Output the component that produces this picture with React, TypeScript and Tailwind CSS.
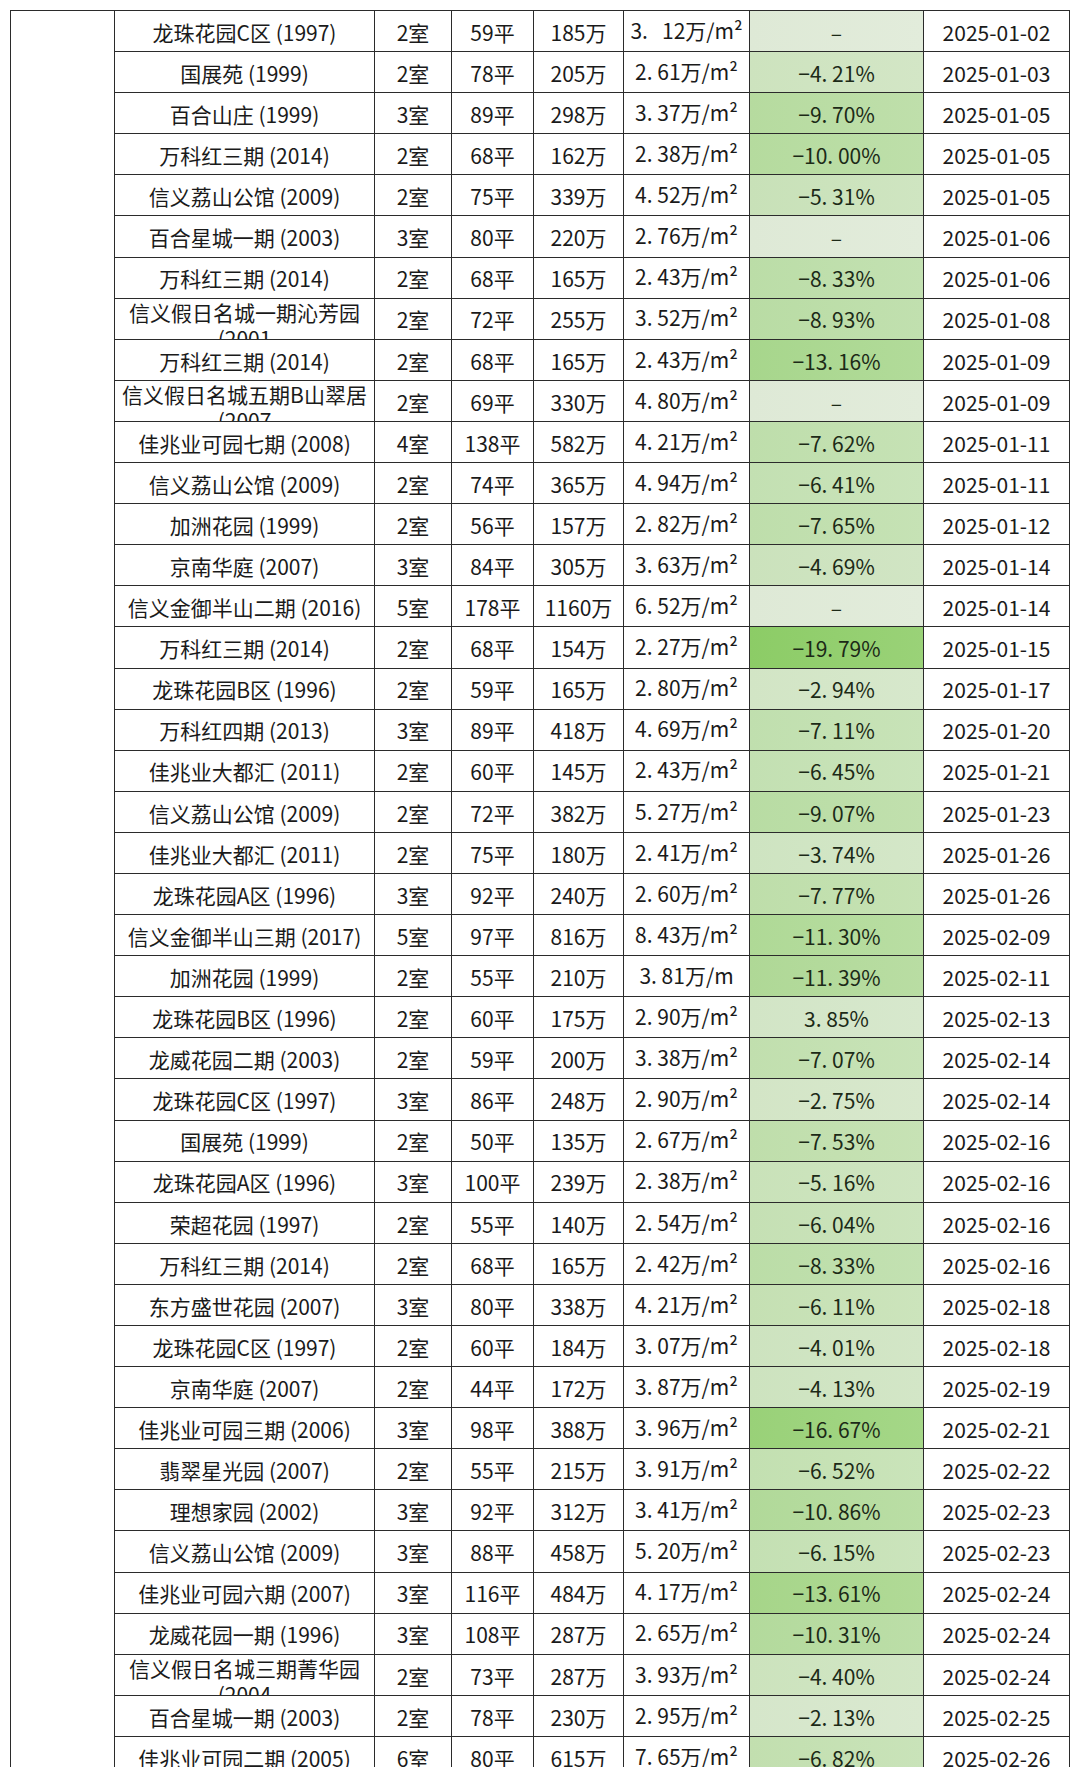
type Row = {
  name: string;
  wrap?: boolean;
  room: string;
  area: string;
  total: string;
  price: string;
  change: number | null;
  label: string;
  date: string;
};

const rows: Row[] = [
  { name: '龙珠花园C区 (1997)', room: '2室', area: '59平', total: '185万', price: '3.   12万/m²', change: null, label: '–', date: '2025-01-02' },
  { name: '国展苑 (1999)', room: '2室', area: '78平', total: '205万', price: '2. 61万/m²', change: -4.21, label: '−4. 21%', date: '2025-01-03' },
  { name: '百合山庄 (1999)', room: '3室', area: '89平', total: '298万', price: '3. 37万/m²', change: -9.7, label: '−9. 70%', date: '2025-01-05' },
  { name: '万科红三期 (2014)', room: '2室', area: '68平', total: '162万', price: '2. 38万/m²', change: -10.0, label: '−10. 00%', date: '2025-01-05' },
  { name: '信义荔山公馆 (2009)', room: '2室', area: '75平', total: '339万', price: '4. 52万/m²', change: -5.31, label: '−5. 31%', date: '2025-01-05' },
  { name: '百合星城一期 (2003)', room: '3室', area: '80平', total: '220万', price: '2. 76万/m²', change: null, label: '–', date: '2025-01-06' },
  { name: '万科红三期 (2014)', room: '2室', area: '68平', total: '165万', price: '2. 43万/m²', change: -8.33, label: '−8. 33%', date: '2025-01-06' },
  { name: '信义假日名城一期沁芳园 (2001', wrap: true, room: '2室', area: '72平', total: '255万', price: '3. 52万/m²', change: -8.93, label: '−8. 93%', date: '2025-01-08' },
  { name: '万科红三期 (2014)', room: '2室', area: '68平', total: '165万', price: '2. 43万/m²', change: -13.16, label: '−13. 16%', date: '2025-01-09' },
  { name: '信义假日名城五期B山翠居 (2007', wrap: true, room: '2室', area: '69平', total: '330万', price: '4. 80万/m²', change: null, label: '–', date: '2025-01-09' },
  { name: '佳兆业可园七期 (2008)', room: '4室', area: '138平', total: '582万', price: '4. 21万/m²', change: -7.62, label: '−7. 62%', date: '2025-01-11' },
  { name: '信义荔山公馆 (2009)', room: '2室', area: '74平', total: '365万', price: '4. 94万/m²', change: -6.41, label: '−6. 41%', date: '2025-01-11' },
  { name: '加洲花园 (1999)', room: '2室', area: '56平', total: '157万', price: '2. 82万/m²', change: -7.65, label: '−7. 65%', date: '2025-01-12' },
  { name: '京南华庭 (2007)', room: '3室', area: '84平', total: '305万', price: '3. 63万/m²', change: -4.69, label: '−4. 69%', date: '2025-01-14' },
  { name: '信义金御半山二期 (2016)', room: '5室', area: '178平', total: '1160万', price: '6. 52万/m²', change: null, label: '–', date: '2025-01-14' },
  { name: '万科红三期 (2014)', room: '2室', area: '68平', total: '154万', price: '2. 27万/m²', change: -19.79, label: '−19. 79%', date: '2025-01-15' },
  { name: '龙珠花园B区 (1996)', room: '2室', area: '59平', total: '165万', price: '2. 80万/m²', change: -2.94, label: '−2. 94%', date: '2025-01-17' },
  { name: '万科红四期 (2013)', room: '3室', area: '89平', total: '418万', price: '4. 69万/m²', change: -7.11, label: '−7. 11%', date: '2025-01-20' },
  { name: '佳兆业大都汇 (2011)', room: '2室', area: '60平', total: '145万', price: '2. 43万/m²', change: -6.45, label: '−6. 45%', date: '2025-01-21' },
  { name: '信义荔山公馆 (2009)', room: '2室', area: '72平', total: '382万', price: '5. 27万/m²', change: -9.07, label: '−9. 07%', date: '2025-01-23' },
  { name: '佳兆业大都汇 (2011)', room: '2室', area: '75平', total: '180万', price: '2. 41万/m²', change: -3.74, label: '−3. 74%', date: '2025-01-26' },
  { name: '龙珠花园A区 (1996)', room: '3室', area: '92平', total: '240万', price: '2. 60万/m²', change: -7.77, label: '−7. 77%', date: '2025-01-26' },
  { name: '信义金御半山三期 (2017)', room: '5室', area: '97平', total: '816万', price: '8. 43万/m²', change: -11.3, label: '−11. 30%', date: '2025-02-09' },
  { name: '加洲花园 (1999)', room: '2室', area: '55平', total: '210万', price: '3. 81万/m', change: -11.39, label: '−11. 39%', date: '2025-02-11' },
  { name: '龙珠花园B区 (1996)', room: '2室', area: '60平', total: '175万', price: '2. 90万/m²', change: 3.85, label: '3. 85%', date: '2025-02-13' },
  { name: '龙威花园二期 (2003)', room: '2室', area: '59平', total: '200万', price: '3. 38万/m²', change: -7.07, label: '−7. 07%', date: '2025-02-14' },
  { name: '龙珠花园C区 (1997)', room: '3室', area: '86平', total: '248万', price: '2. 90万/m²', change: -2.75, label: '−2. 75%', date: '2025-02-14' },
  { name: '国展苑 (1999)', room: '2室', area: '50平', total: '135万', price: '2. 67万/m²', change: -7.53, label: '−7. 53%', date: '2025-02-16' },
  { name: '龙珠花园A区 (1996)', room: '3室', area: '100平', total: '239万', price: '2. 38万/m²', change: -5.16, label: '−5. 16%', date: '2025-02-16' },
  { name: '荣超花园 (1997)', room: '2室', area: '55平', total: '140万', price: '2. 54万/m²', change: -6.04, label: '−6. 04%', date: '2025-02-16' },
  { name: '万科红三期 (2014)', room: '2室', area: '68平', total: '165万', price: '2. 42万/m²', change: -8.33, label: '−8. 33%', date: '2025-02-16' },
  { name: '东方盛世花园 (2007)', room: '3室', area: '80平', total: '338万', price: '4. 21万/m²', change: -6.11, label: '−6. 11%', date: '2025-02-18' },
  { name: '龙珠花园C区 (1997)', room: '2室', area: '60平', total: '184万', price: '3. 07万/m²', change: -4.01, label: '−4. 01%', date: '2025-02-18' },
  { name: '京南华庭 (2007)', room: '2室', area: '44平', total: '172万', price: '3. 87万/m²', change: -4.13, label: '−4. 13%', date: '2025-02-19' },
  { name: '佳兆业可园三期 (2006)', room: '3室', area: '98平', total: '388万', price: '3. 96万/m²', change: -16.67, label: '−16. 67%', date: '2025-02-21' },
  { name: '翡翠星光园 (2007)', room: '2室', area: '55平', total: '215万', price: '3. 91万/m²', change: -6.52, label: '−6. 52%', date: '2025-02-22' },
  { name: '理想家园 (2002)', room: '3室', area: '92平', total: '312万', price: '3. 41万/m²', change: -10.86, label: '−10. 86%', date: '2025-02-23' },
  { name: '信义荔山公馆 (2009)', room: '3室', area: '88平', total: '458万', price: '5. 20万/m²', change: -6.15, label: '−6. 15%', date: '2025-02-23' },
  { name: '佳兆业可园六期 (2007)', room: '3室', area: '116平', total: '484万', price: '4. 17万/m²', change: -13.61, label: '−13. 61%', date: '2025-02-24' },
  { name: '龙威花园一期 (1996)', room: '3室', area: '108平', total: '287万', price: '2. 65万/m²', change: -10.31, label: '−10. 31%', date: '2025-02-24' },
  { name: '信义假日名城三期菁华园 (2004', wrap: true, room: '2室', area: '73平', total: '287万', price: '3. 93万/m²', change: -4.4, label: '−4. 40%', date: '2025-02-24' },
  { name: '百合星城一期 (2003)', room: '2室', area: '78平', total: '230万', price: '2. 95万/m²', change: -2.13, label: '−2. 13%', date: '2025-02-25' },
  { name: '佳兆业可园二期 (2005)', room: '6室', area: '80平', total: '615万', price: '7. 65万/m²', change: -6.82, label: '−6. 82%', date: '2025-02-26' },
];

// colour scale for the change column: pale grey-green -> strong green
const scaleColor = (v: number | null) => {
  const t = v === null ? 0 : v > 0 ? 0.14 : Math.min(-v / 20, 1);
  const from = [222, 233, 214];
  const to = [139, 204, 101];
  const c = from.map((f, i) => Math.round(f + (to[i] - f) * t));
  const light = c.map((x) => Math.round(x + (255 - x) * 0.12));
  return `linear-gradient(to right, rgb(${c.join(',')}), rgb(${light.join(',')}))`;
};

const cell = 'bg-white flex items-center justify-center overflow-hidden pt-[3px] whitespace-nowrap';

export default function App() {
  return (
    <div
      className="h-[1767px] w-[1080px] overflow-hidden bg-white pt-[10px] pl-[10px] text-[21px] text-[#1a1a1a]"
      style={{ fontFamily: '"Noto Sans CJK SC", "Noto Sans", sans-serif' }}
    >
      <div className="grid w-max grid-cols-[103px_259px_76px_81px_89px_125px_173px_145px] auto-rows-[40.1px] gap-px bg-[#2b2b2b] p-px">
        {/* merged blank column on the left */}
        <div className="bg-white [grid-row:span_43]" />
        {rows.map((r, i) => (
          <div key={i} className="contents">
            {r.wrap ? (
              <div className="overflow-hidden bg-white text-center leading-[26px]">{r.name}</div>
            ) : (
              <div className={cell}>{r.name}</div>
            )}
            <div className={cell}>{r.room}</div>
            <div className={cell}>{r.area}</div>
            <div className={cell}>{r.total}</div>
            <div className={`${cell} whitespace-pre pb-[4px]`}>{r.price}</div>
            <div className="flex items-center justify-center pt-[3px] text-[#1c2a17]" style={{ background: scaleColor(r.change) }}>
              {r.label}
            </div>
            <div className={cell}>{r.date}</div>
          </div>
        ))}
      </div>
    </div>
  );
}
